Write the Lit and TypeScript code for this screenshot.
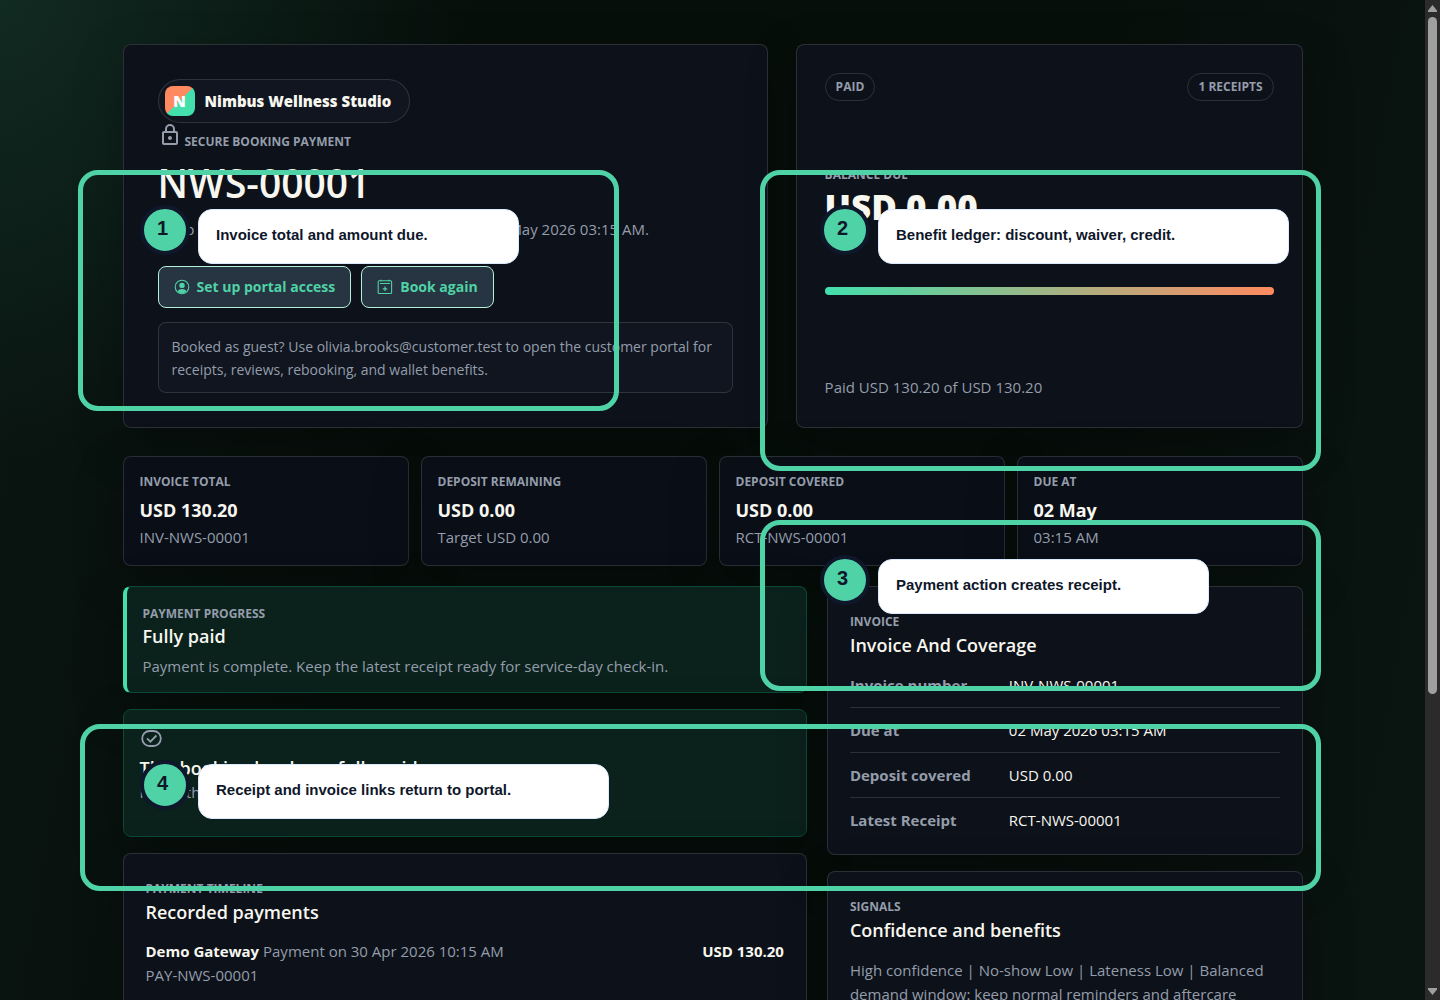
import { LitElement, html, css, svg } from "lit";
import { customElement } from "lit/decorators.js";

interface Metric {
  label: string;
  value: string;
  note: string;
}

const METRICS: Metric[] = [
  { label: "Invoice total", value: "USD 130.20", note: "INV-NWS-00001" },
  { label: "Deposit remaining", value: "USD 0.00", note: "Target USD 0.00" },
  { label: "Deposit covered", value: "USD 0.00", note: "RCT-NWS-00001" },
  { label: "Due at", value: "02 May", note: "03:15 AM" },
];

const INVOICE_ROWS: [string, string][] = [
  ["Invoice number", "INV-NWS-00001"],
  ["Due at", "02 May 2026 03:15 AM"],
  ["Deposit covered", "USD 0.00"],
  ["Latest Receipt", "RCT-NWS-00001"],
];

const NOTES = [
  "Invoice total and amount due.",
  "Benefit ledger: discount, waiver, credit.",
  "Payment action creates receipt.",
  "Receipt and invoice links return to portal.",
];

const lockIcon = svg`<path fill="currentColor" d="M12,17C10.89,17 10,16.1 10,15C10,13.89 10.89,13 12,13A2,2 0 0,1 14,15A2,2 0 0,1 12,17M18,20V10H6V20H18M18,8A2,2 0 0,1 20,10V20A2,2 0 0,1 18,22H6C4.89,22 4,21.1 4,20V10C4,8.89 4.89,8 6,8H7V6A5,5 0 0,1 12,1A5,5 0 0,1 17,6V8H18M12,3A3,3 0 0,0 9,6V8H15V6A3,3 0 0,0 12,3Z"/>`;

const accountIcon = svg`
  <circle cx="8" cy="8" r="6.8" fill="none" stroke="currentColor" stroke-width="1.1"/>
  <circle cx="8" cy="6.4" r="2.7" fill="currentColor"/>
  <path fill="currentColor" d="M3.6 12.4C4.4 10.8 6 10.1 8 10.1s3.6.7 4.4 2.3A6.4 6.4 0 0 1 8 14.2a6.4 6.4 0 0 1-4.4-1.8Z"/>`;

const calendarIcon = svg`
  <rect x="1.2" y="1.7" width="13.4" height="12.8" rx="1" fill="none" stroke="currentColor" stroke-width="1.1"/>
  <path d="M3 4.5h10M4 .8v1.4M12 .8v1.4M8 7.6v4.4M5.8 9.8h4.4" fill="none" stroke="currentColor" stroke-width="1.2"/>`;

const checkIcon = svg`
  <rect x="2.2" y="4" width="18.6" height="15" rx="7.5" fill="none" stroke="currentColor" stroke-width="1.8"/>
  <path d="M7 11.4l3.4 3.3 6-6.2" fill="none" stroke="currentColor" stroke-width="1.8"/>`;

@customElement("app-root")
export class AppRoot extends LitElement {
  static styles = css`
    :host {
      --ink: #f7f7f0;
      --muted: #949dab;
      --mint: #50d2a7;
      --line: rgba(255, 255, 255, 0.13);
      --panel: #0d1119;
      display: flex;
      position: relative;
      height: 100vh;
      overflow: hidden;
      color: var(--muted);
      font: 400 15px/24px "Open Sans", "Noto Sans", sans-serif;
      background: #07100d;
    }
    * {
      box-sizing: border-box;
      margin: 0;
    }
    .page {
      flex: 1;
      min-width: 0;
      padding: 44px 20px;
      background:
        radial-gradient(circle at 0 0, rgba(38, 110, 82, 0.24), transparent 460px),
        linear-gradient(100deg, #0a1512 0%, #070f0b 30%, #070f0b 70%, #0a1512 100%);
    }
    .content {
      max-width: 1180px;
      margin: 0 auto;
    }
    .card {
      background: var(--panel);
      border: 1px solid var(--line);
      border-radius: 8px;
      box-shadow: 0 18px 50px rgba(0, 0, 0, 0.26);
    }
    .eyebrow {
      font-size: 12px;
      font-weight: 700;
      line-height: 18px;
      text-transform: uppercase;
    }
    h1, h2, strong {
      color: var(--ink);
    }
    .hero {
      display: grid;
      grid-template-columns: 56fr 44fr;
      gap: 28px;
    }
    .summary {
      display: flex;
      flex-direction: column;
      align-items: flex-start;
      padding: 34px;
    }
    .brand {
      display: flex;
      align-items: center;
      gap: 10px;
      height: 44px;
      padding: 0 18px 0 6px;
      border: 1px solid var(--line);
      border-radius: 22px;
      background: #10151f;
      color: var(--ink);
      font-weight: 800;
    }
    .mark {
      display: grid;
      place-items: center;
      width: 30px;
      height: 30px;
      border-radius: 8px;
      color: #fff;
      background: linear-gradient(135deg, #ff8a5f 50%, #43dfad 50%);
    }
    .secure {
      display: flex;
      align-items: flex-end;
      gap: 3px;
      height: 28px;
    }
    .secure svg {
      align-self: flex-start;
    }
    h1 {
      margin-top: 8px;
      font-size: 39px;
      font-weight: 600;
      line-height: 48px;
    }
    .lead {
      margin-top: 10px;
    }
    .actions {
      display: flex;
      gap: 10px;
      margin-top: 25px;
    }
    .button {
      display: flex;
      align-items: center;
      gap: 7px;
      height: 42px;
      padding: 0 15px;
      border: 1px solid #b5f0d8;
      border-radius: 8px;
      background: #263541;
      color: var(--mint);
      font-size: 14px;
      font-weight: 700;
      text-decoration: none;
    }
    .guest {
      align-self: stretch;
      margin-top: 14px;
      padding: 12px 13px 11px;
      border: 1px solid var(--line);
      border-radius: 8px;
      background: #10151f;
      font-size: 14px;
      line-height: 23px;
    }
    .balance {
      display: flex;
      flex-direction: column;
      justify-content: space-between;
      padding: 28px;
    }
    .tags {
      display: flex;
      justify-content: space-between;
    }
    .tag {
      padding: 4px 10px;
      border: 1px solid var(--line);
      border-radius: 14px;
    }
    .due {
      padding-top: 5px;
    }
    .amount {
      display: block;
      margin-top: 2px;
      font-size: 35px;
      font-weight: 800;
      line-height: 42px;
    }
    .bar {
      height: 8px;
      border-radius: 4px;
      background: linear-gradient(90deg, #43dfad, #ff8a5f);
    }
    .paid {
      padding-top: 20px;
    }
    .metrics {
      display: grid;
      grid-template-columns: repeat(4, 1fr);
      gap: 12px;
      margin-top: 28px;
    }
    .metric {
      display: flex;
      flex-direction: column;
      padding: 16px;
      background: #0a0e17;
    }
    .metric strong {
      margin: 5px 0 1px;
      font-size: 18px;
      font-weight: 700;
      line-height: 28px;
    }
    .columns {
      display: grid;
      grid-template-columns: 59fr 41fr;
      align-items: start;
      gap: 20px;
      margin-top: 20px;
    }
    .stack {
      display: grid;
      gap: 16px;
      min-width: 0;
    }
    h2 {
      font-size: 18px;
      font-weight: 600;
      line-height: 24px;
    }
    .good {
      background: #0b211c;
      border-color: #0c4937;
    }
    .progress {
      padding: 18px 16px 14px;
      border-left: 4px solid #43dfad;
    }
    .progress h2 {
      margin: 1px 0 6px;
    }
    .settled {
      padding: 17px 16px 32px;
    }
    .settled svg {
      display: block;
      margin-bottom: 5px;
    }
    .detail {
      padding: 26px 22px 12px;
    }
    .detail h2 {
      margin: 2px 0 6px;
    }
    .row {
      display: flex;
      padding: 10px 0;
      border-bottom: 1px solid var(--line);
    }
    .row:last-child {
      border-bottom: 0;
    }
    dt {
      width: 37%;
      font-weight: 700;
    }
    dd {
      color: var(--ink);
    }
    .payment {
      display: flex;
      justify-content: space-between;
      padding: 9px 0 24px;
    }
    .payment strong {
      font-weight: 700;
    }
    .signals {
      padding: 10px 0 24px;
    }
    .scrollbar {
      display: flex;
      flex-direction: column;
      align-items: center;
      justify-content: space-between;
      width: 15px;
      padding: 5px 0;
      background: #2b2b2b;
    }
    .scrollbar svg {
      display: block;
    }
    .track {
      flex: 1;
      width: 9px;
      padding: 5px 0 4px;
    }
    .thumb {
      height: 70%;
      border-radius: 5px;
      background: #9f9f9f;
    }
    /* Numbered guide markers floating over the page */
    .frame, .badge, .label {
      position: absolute;
    }
    .frame {
      border: 5px solid var(--mint);
      border-radius: 20px;
      pointer-events: none;
    }
    .badge {
      display: grid;
      place-items: center;
      width: 50px;
      height: 50px;
      padding: 0 5px 5px 0;
      border: 4px solid #0f172a;
      border-radius: 50%;
      background: var(--mint);
      color: #0f172a;
      font: 700 20px/24px "Liberation Sans", Arial, sans-serif;
    }
    .label {
      height: 55px;
      padding: 13px 17px;
      border: 1px solid #dbeafe;
      border-radius: 14px;
      background: #fff;
      color: #0f172a;
      font: 700 15px/24px "Liberation Sans", Arial, sans-serif;
    }
    .frame1 { left: 78px; top: 170px; width: 541px; height: 241px; }
    .frame2 { left: 760px; top: 170px; width: 561px; height: 301px; }
    .frame3 { left: 760px; top: 520px; width: 561px; height: 171px; }
    .frame4 { left: 80px; top: 724px; width: 1241px; height: 167px; }
    .badge1 { left: 140px; top: 205px; }
    .badge2 { left: 820px; top: 205px; }
    .badge3 { left: 820px; top: 555px; }
    .badge4 { left: 140px; top: 760px; }
    .label1 { left: 198px; top: 209px; width: 321px; }
    .label2 { left: 878px; top: 209px; width: 411px; }
    .label3 { left: 878px; top: 559px; width: 331px; }
    .label4 { left: 198px; top: 764px; width: 411px; }
  `;

  render() {
    return html`
      <main class="page">
        <div class="content">
          <section class="hero">
            <div class="card summary">
              <div class="brand"><span class="mark">N</span>Nimbus Wellness Studio</div>
              <div class="secure eyebrow">
                <svg width="24" height="24" viewBox="0 0 24 24" aria-hidden="true">${lockIcon}</svg>
                <span>Secure booking payment</span>
              </div>
              <h1>NWS-00001</h1>
              <p class="lead">Deep Tissue Massage for Olivia Brooks booked 02 May 2026 03:15 AM.</p>
              <div class="actions">
                <a class="button" href="#portal">
                  <svg width="16" height="16" viewBox="0 0 16 16" aria-hidden="true">${accountIcon}</svg>Set up portal access
                </a>
                <a class="button" href="#book">
                  <svg width="16" height="16" viewBox="0 0 16 16" aria-hidden="true">${calendarIcon}</svg>Book again
                </a>
              </div>
              <p class="guest">
                Booked as guest? Use olivia.brooks@customer.test to open the customer portal for receipts, reviews, rebooking, and wallet benefits.
              </p>
            </div>
            <div class="card balance">
              <div class="tags">
                <span class="tag eyebrow">Paid</span>
                <span class="tag eyebrow">1 receipts</span>
              </div>
              <div class="due">
                <div class="eyebrow">Balance due</div>
                <strong class="amount">USD 0.00</strong>
              </div>
              <div class="bar"></div>
              <p class="paid">Paid USD 130.20 of USD 130.20</p>
            </div>
          </section>

          <section class="metrics">
            ${METRICS.map(
              (m) => html`
                <div class="card metric">
                  <span class="eyebrow">${m.label}</span>
                  <strong>${m.value}</strong>
                  <span>${m.note}</span>
                </div>
              `,
            )}
          </section>

          <section class="columns">
            <div class="stack">
              <div class="card good progress">
                <div class="eyebrow">Payment progress</div>
                <h2>Fully paid</h2>
                <p>Payment is complete. Keep the latest receipt ready for service-day check-in.</p>
              </div>
              <div class="card good settled">
                <svg width="24" height="24" viewBox="0 0 24 24" aria-hidden="true">${checkIcon}</svg>
                <h2>This booking has been fully paid</h2>
                <p>Reuse the receipt for check-in.</p>
              </div>
              <div class="card detail">
                <div class="eyebrow">Payment timeline</div>
                <h2>Recorded payments</h2>
                <div class="payment">
                  <div>
                    <strong>Demo Gateway</strong> Payment on 30 Apr 2026 10:15 AM
                    <div>PAY-NWS-00001</div>
                  </div>
                  <strong>USD 130.20</strong>
                </div>
              </div>
            </div>
            <div class="stack">
              <div class="card detail">
                <div class="eyebrow">Invoice</div>
                <h2>Invoice And Coverage</h2>
                <dl>
                  ${INVOICE_ROWS.map(([k, v]) => html`<div class="row"><dt>${k}</dt><dd>${v}</dd></div>`)}
                </dl>
              </div>
              <div class="card detail">
                <div class="eyebrow">Signals</div>
                <h2>Confidence and benefits</h2>
                <p class="signals">
                  High confidence | No-show Low | Lateness Low | Balanced demand window: keep normal reminders and aftercare
                </p>
              </div>
            </div>
          </section>
        </div>
      </main>
      <div class="scrollbar" aria-hidden="true">
        <svg width="9" height="7" viewBox="0 0 9 7"><path d="M4.5 0L9 5.5V7H0V5.5Z" fill="#9f9f9f"/></svg>
        <div class="track"><div class="thumb"></div></div>
        <svg width="9" height="7" viewBox="0 0 9 7"><path d="M4.5 7L9 1.5V0H0V1.5Z" fill="#9f9f9f"/></svg>
      </div>
      ${NOTES.map(
        (text, i) => html`
          <div class="frame frame${i + 1}"></div>
          <div class="badge badge${i + 1}">${i + 1}</div>
          <div class="label label${i + 1}">${text}</div>
        `,
      )}
    `;
  }
}
